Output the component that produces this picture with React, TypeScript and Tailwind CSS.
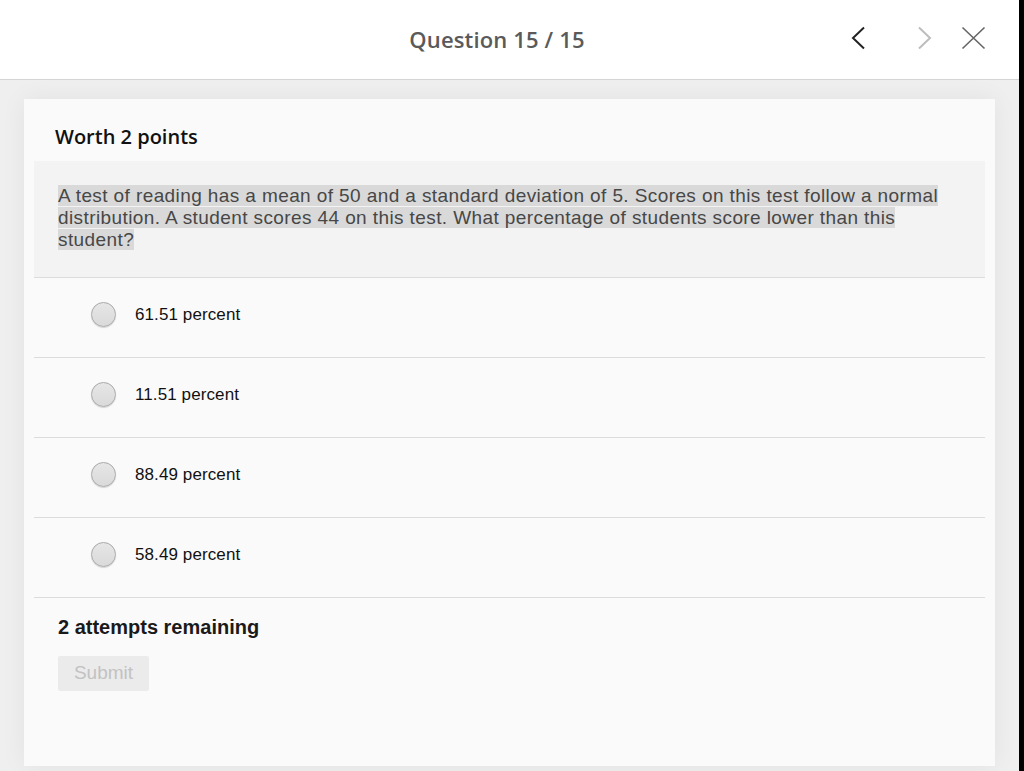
import React from "react";

const options = ["61.51 percent", "11.51 percent", "88.49 percent", "58.49 percent"];

export default function App() {
  return (
    <div className="flex w-[1024px] h-[771px] overflow-hidden bg-black">
      <div className="w-[1019px] h-full flex flex-col bg-[#efefef]">
        <header className="relative h-[80px] shrink-0 bg-white border-b border-[#d4d4d4] flex items-center justify-center">
          <div
            className="text-[22px] tracking-[0.15px] font-semibold text-[#5a5a5a] ml-[-25px] mt-[-1px]"
            style={{ fontFamily: '"Open Sans", sans-serif' }}
          >
            Question 15 / 15
          </div>
          <div className="absolute left-[850px] top-[26px] flex items-center">
            <svg width="16" height="24" viewBox="0 0 16 24" fill="none">
              <path d="M14 1.5 L3 12 L14 22.5" stroke="#222" strokeWidth="2" />
            </svg>
            <svg width="16" height="24" viewBox="0 0 16 24" fill="none" className="ml-[51px]">
              <path d="M2 1.5 L13 12 L2 22.5" stroke="#bdbdbd" strokeWidth="2" />
            </svg>
            <svg width="25" height="24" viewBox="0 0 25 24" fill="none" className="ml-[28px]">
              <path d="M1.5 1.5 L23.5 22.5 M23.5 1.5 L1.5 22.5" stroke="#666" strokeWidth="1.6" />
            </svg>
          </div>
        </header>
        <div className="flex-1 pt-[19px] pl-[24px] pr-[24px]">
          <div className="h-[667px] bg-[#fafafa] shadow-[0_0_24px_rgba(0,0,0,0.06)] px-[10px] pt-[24px]">
            <div
              className="pl-[21px] text-[20px] font-semibold text-[#111] leading-[28px]"
              style={{ fontFamily: '"Open Sans", sans-serif' }}
            >
              Worth 2 points
            </div>
            <div className="mt-[10px] bg-[#f3f3f3] border-b border-[#dcdcdc] pt-[24px] pb-[26px] pl-[24px]">
              <p
                className="w-[892px] text-[19px] tracking-[0.4px] leading-[22px] text-[#474747]"
                style={{ fontFamily: '"Liberation Sans", Arial, sans-serif' }}
              >
                <span className="bg-[#d9d9d9]">
                  A test of reading has a mean of 50 and a standard deviation of 5. Scores on this test follow a normal distribution. A student scores 44 on this test. What percentage of students score lower than this student?
                </span>
              </p>
            </div>
            {options.map((o) => (
              <div key={o} className="h-[80px] border-b border-[#dcdcdc] flex items-center pl-[57px] pb-[6px]">
                <div className="w-[25px] h-[25px] rounded-full border border-[#a9a9a9] bg-gradient-to-b from-[#e6e6e6] to-[#dadada] shadow-[0_1px_1px_rgba(0,0,0,0.15)]" />
                <span
                  className="ml-[19px] text-[17px] tracking-[0.1px] text-[#111]"
                  style={{ fontFamily: '"Liberation Sans", Arial, sans-serif' }}
                >
                  {o}
                </span>
              </div>
            ))}
            <div className="pl-[24px] pt-[17px]">
              <div
                className="text-[20px] font-bold text-[#1a1a1a] leading-[24px]"
                style={{ fontFamily: '"Liberation Sans", Arial, sans-serif' }}
              >
                2 attempts remaining
              </div>
              <div
                className="mt-[17px] w-[91px] h-[35px] bg-[#ebebeb] rounded-[2px] flex items-center justify-center text-[19px] text-[#c2c2c2]"
                style={{ fontFamily: '"Liberation Sans", Arial, sans-serif' }}
              >
                Submit
              </div>
            </div>
          </div>
        </div>
      </div>
      <div className="w-[5px] h-full bg-black" />
    </div>
  );
}
